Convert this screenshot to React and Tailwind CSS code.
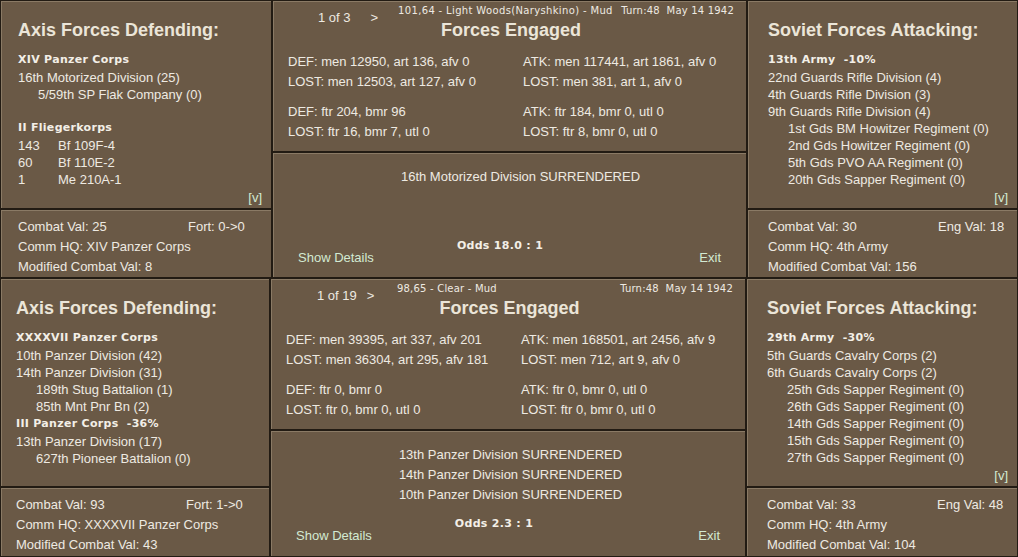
import React from "react";

const SEC = "bg-[#6a5946] border border-[#221b13] shadow-[inset_1px_1px_0_#8a7a65]";
const BOLD = "font-['DejaVu_Sans',Verdana,sans-serif] font-bold text-[11px] tracking-[0.3px] text-[#f3efe7]";
const GREEN = "text-[#d3ead3]";

const screens = [
  {
    h: "h-[278px]",
    leftW: "w-[272px]",
    midW: "w-[475px]",
    leftPl: "pl-[17px]",
    rightPl: "pl-[20px]",
    left: {
      title: "Axis Forces Defending:",
      v: true,
      items: [
        { t: "h", text: "XIV Panzer Corps" },
        { t: "l", text: "16th Motorized Division (25)" },
        { t: "i", text: "5/59th SP Flak Company (0)" },
        { t: "b" },
        { t: "h", text: "II Fliegerkorps" },
        { t: "a", n: "143", text: "Bf 109F-4" },
        { t: "a", n: "60", text: "Bf 110E-2" },
        { t: "a", n: "1", text: "Me 210A-1" },
      ],
      combat: "Combat Val: 25",
      second: "Fort: 0->0",
      hq: "Comm HQ: XIV Panzer Corps",
      mod: "Modified Combat Val: 8",
    },
    right: {
      title: "Soviet Forces Attacking:",
      v: true,
      items: [
        { t: "h", text: "13th Army", suf: "-10%" },
        { t: "l", text: "22nd Guards Rifle Division (4)" },
        { t: "l", text: "4th Guards Rifle Division (3)" },
        { t: "l", text: "9th Guards Rifle Division (4)" },
        { t: "i", text: "1st Gds BM Howitzer Regiment (0)" },
        { t: "i", text: "2nd Gds Howitzer Regiment (0)" },
        { t: "i", text: "5th Gds PVO AA Regiment (0)" },
        { t: "i", text: "20th Gds Sapper Regiment (0)" },
      ],
      combat: "Combat Val: 30",
      second: "Eng Val: 18",
      hq: "Comm HQ: 4th Army",
      mod: "Modified Combat Val: 156",
    },
    mid: {
      page: "1 of 3",
      pageBox: "w-[110px] pl-[30px]",
      gtMl: "ml-[20px]",
      info: "101,64 - Light Woods(Naryshkino) - Mud",
      infoTrack: "tracking-[0.35px]",
      turn: "Turn:48  May 14 1942",
      def1: "DEF: men 12950, art 136, afv 0",
      lost1: "LOST: men 12503, art 127, afv 0",
      atk1: "ATK: men 117441, art 1861, afv 0",
      alost1: "LOST: men 381, art 1, afv 0",
      def2: "DEF: ftr 204, bmr 96",
      lost2: "LOST: ftr 16, bmr 7, utl 0",
      atk2: "ATK: ftr 184, bmr 0, utl 0",
      alost2: "LOST: ftr 8, bmr 0, utl 0",
      surr: ["16th Motorized Division SURRENDERED"],
      surrShift: "pl-[22px]",
      odds: "Odds 18.0 : 1",
      oddsShift: "pr-[19px]",
      pb: "pb-[11px]",
    },
  },
  {
    h: "h-[279px]",
    leftW: "w-[270px]",
    midW: "w-[476px]",
    leftPl: "pl-[15px]",
    rightPl: "pl-[20px]",
    left: {
      title: "Axis Forces Defending:",
      v: false,
      items: [
        { t: "h", text: "XXXXVII Panzer Corps" },
        { t: "l", text: "10th Panzer Division (42)" },
        { t: "l", text: "14th Panzer Division (31)" },
        { t: "i", text: "189th Stug Battalion (1)" },
        { t: "i", text: "85th Mnt Pnr Bn (2)" },
        { t: "h", text: "III Panzer Corps", suf: "-36%" },
        { t: "l", text: "13th Panzer Division (17)" },
        { t: "i", text: "627th Pioneer Battalion (0)" },
      ],
      combat: "Combat Val: 93",
      second: "Fort: 1->0",
      hq: "Comm HQ: XXXXVII Panzer Corps",
      mod: "Modified Combat Val: 43",
    },
    right: {
      title: "Soviet Forces Attacking:",
      v: true,
      items: [
        { t: "h", text: "29th Army", suf: "-30%" },
        { t: "l", text: "5th Guards Cavalry Corps (2)" },
        { t: "l", text: "6th Guards Cavalry Corps (2)" },
        { t: "i", text: "25th Gds Sapper Regiment (0)" },
        { t: "i", text: "26th Gds Sapper Regiment (0)" },
        { t: "i", text: "14th Gds Sapper Regiment (0)" },
        { t: "i", text: "15th Gds Sapper Regiment (0)" },
        { t: "i", text: "27th Gds Sapper Regiment (0)" },
      ],
      combat: "Combat Val: 33",
      second: "Eng Val: 48",
      hq: "Comm HQ: 4th Army",
      mod: "Modified Combat Val: 104",
    },
    mid: {
      page: "1 of 19",
      pageBox: "w-[111px] pl-[31px]",
      gtMl: "ml-[10px]",
      info: "98,65 - Clear - Mud",
      infoTrack: "tracking-[0.2px]",
      turn: "Turn:48  May 14 1942",
      def1: "DEF: men 39395, art 337, afv 201",
      lost1: "LOST: men 36304, art 295, afv 181",
      atk1: "ATK: men 168501, art 2456, afv 9",
      alost1: "LOST: men 712, art 9, afv 0",
      def2: "DEF: ftr 0, bmr 0",
      lost2: "LOST: ftr 0, bmr 0, utl 0",
      atk2: "ATK: ftr 0, bmr 0, utl 0",
      alost2: "LOST: ftr 0, bmr 0, utl 0",
      surr: [
        "13th Panzer Division SURRENDERED",
        "14th Panzer Division SURRENDERED",
        "10th Panzer Division SURRENDERED",
      ],
      surrShift: "pl-[5px]",
      odds: "Odds 2.3 : 1",
      oddsShift: "pr-[28px]",
      pb: "pb-[12px]",
    },
  },
];

function Item({ it }) {
  if (it.t === "h")
    return (
      <div className={`h-[18px] leading-[18px] whitespace-pre ${BOLD}`}>
        {it.text}
        {it.suf ? "  " + it.suf : ""}
      </div>
    );
  if (it.t === "b") return <div className="h-[16px]" />;
  if (it.t === "i")
    return <div className="h-[17px] leading-[17px] pl-[20px] whitespace-nowrap">{it.text}</div>;
  if (it.t === "a")
    return (
      <div className="h-[17px] leading-[17px] flex whitespace-nowrap">
        <span className="w-[40px]">{it.n}</span>
        <span>{it.text}</span>
      </div>
    );
  return <div className="h-[17px] leading-[17px] whitespace-nowrap">{it.text}</div>;
}

function Side({ d, w, pl }) {
  return (
    <div className={`${w} flex flex-col shrink-0`}>
      <div className={`h-[209px] flex flex-col ${SEC} pt-[18px] ${pl} pr-[9px]`}>
        <div className="h-[22px] leading-[22px] text-[18px] font-bold text-[#ebe5d8] whitespace-nowrap">
          {d.title}
        </div>
        <div className="mt-[10px] flex flex-col">
          {d.items.map((it, i) => (
            <Item key={i} it={it} />
          ))}
        </div>
        {d.v && (
          <div className={`mt-auto mb-[2px] self-end leading-[17px] ${GREEN}`}>[v]</div>
        )}
      </div>
      <div className={`flex-1 ${SEC} pt-[7px] ${pl}`}>
        <div className="flex leading-[20px] whitespace-nowrap">
          <div className="w-[170px]">{d.combat}</div>
          <div>{d.second}</div>
        </div>
        <div className="leading-[20px] whitespace-nowrap">{d.hq}</div>
        <div className="leading-[20px] whitespace-nowrap">{d.mod}</div>
      </div>
    </div>
  );
}

function Middle({ m, w }) {
  return (
    <div className={`${w} flex flex-col shrink-0`}>
      <div className={`h-[152px] ${SEC} pt-[3px] pl-[15px] pr-[12px]`}>
        <div className="h-[15px] flex items-start whitespace-nowrap">
          <div className={`${m.pageBox} flex shrink-0 mt-[5px] leading-[17px]`}>
            <span>{m.page}</span>
            <span className={m.gtMl}>&gt;</span>
          </div>
          <div className={`flex-1 font-['DejaVu_Sans',Verdana,sans-serif] text-[10px] leading-[13px] ${m.infoTrack}`}>
            {m.info}
          </div>
          <div className="ml-[8px] shrink-0 font-['DejaVu_Sans',Verdana,sans-serif] text-[10px] leading-[13px] tracking-[0.2px] whitespace-pre">
            {m.turn}
          </div>
        </div>
        <div className="h-[22px] leading-[22px] text-[18px] font-bold text-center text-[#ebe5d8]">
          Forces Engaged
        </div>
        <div className="mt-[11px] grid grid-cols-[235px_1fr] leading-[20px] whitespace-nowrap">
          <div>{m.def1}</div>
          <div>{m.atk1}</div>
          <div>{m.lost1}</div>
          <div>{m.alost1}</div>
        </div>
        <div className="mt-[10px] grid grid-cols-[235px_1fr] leading-[20px] whitespace-nowrap">
          <div>{m.def2}</div>
          <div>{m.atk2}</div>
          <div>{m.lost2}</div>
          <div>{m.alost2}</div>
        </div>
      </div>
      <div className={`flex-1 ${SEC} flex flex-col pt-[14px] ${m.pb}`}>
        <div className={`flex flex-col items-center leading-[20px] ${m.surrShift}`}>
          {m.surr.map((s, i) => (
            <div key={i} className="whitespace-nowrap">
              {s}
            </div>
          ))}
        </div>
        <div className="flex-1" />
        <div className={`h-[14px] leading-[14px] text-center ${BOLD} ${m.oddsShift}`}>{m.odds}</div>
        <div className={`-mt-[4px] h-[17px] leading-[17px] flex justify-between px-[25px] ${GREEN}`}>
          <span>Show Details</span>
          <span>Exit</span>
        </div>
      </div>
    </div>
  );
}

export default function App() {
  return (
    <div className="w-[1018px] h-[557px] overflow-hidden bg-[#221b13] flex flex-col font-['Liberation_Sans',Arial,sans-serif] text-[13px] text-[#eeeae2]">
      {screens.map((s, i) => (
        <div key={i} className={`${s.h} flex shrink-0`}>
          <Side d={s.left} w={s.leftW} pl={s.leftPl} />
          <Middle m={s.mid} w={s.midW} />
          <div className="flex-1 flex">
            <Side d={s.right} w="w-full" pl={s.rightPl} />
          </div>
        </div>
      ))}
    </div>
  );
}
